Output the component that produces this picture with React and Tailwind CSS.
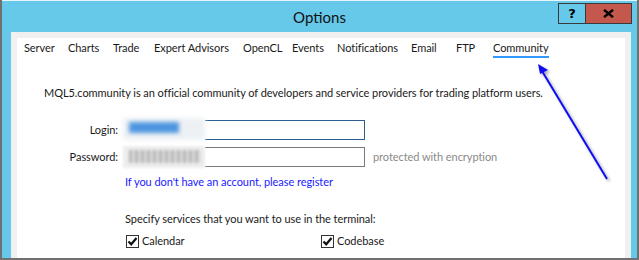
import React from 'react';

const tabs = [
  { label: 'Server', w: 'w-[44px]' },
  { label: 'Charts', w: 'w-[45px]' },
  { label: 'Trade', w: 'w-[41px]' },
  { label: 'Expert Advisors', w: 'w-[89px]' },
  { label: 'OpenCL', w: 'w-[49px]' },
  { label: 'Events', w: 'w-[45px]' },
  { label: 'Notifications', w: 'w-[74px]' },
  { label: 'Email', w: 'w-[45px]' },
  { label: 'FTP', w: 'w-[37px]' },
];

function CheckBox({ label }) {
  return (
    <label className="flex items-center">
      <span className="w-[13px] h-[13px] border border-[#333] bg-white flex items-center justify-center">
        <svg width="11" height="11" viewBox="0 0 11 11">
          <path d="M1.5 5.5 L4.2 8.3 L9.5 2" fill="none" stroke="#111" strokeWidth="2.2" />
        </svg>
      </span>
      <span className="ml-[3px]">{label}</span>
    </label>
  );
}

export default function App() {
  return (
    <div className="relative w-[639px] h-[260px] overflow-hidden bg-[#67c9e9] border-l-2 border-r-2 border-b-2 border-[#707070] flex flex-col text-[11px] tracking-[-0.06px] text-[#1a1a1a] font-['Lato',sans-serif]">
      {/* Title bar */}
      <div className="relative h-[32px] shrink-0 border-t border-[#e8f6fb] flex items-center justify-center">
        <span className="text-[15px] tracking-normal text-[#111] mt-[2px]">Options</span>
        <div className="absolute right-[5px] top-[2px] flex border border-[#3a3a3a] h-[21px]">
          <div className="w-[27px] bg-[#67c9e9] border-r border-[#3a3a3a] flex items-center justify-center font-bold text-[13px] text-black font-['DejaVu_Sans',sans-serif]">
            ?
          </div>
          <div className="w-[45px] bg-[#c4584c] flex items-center justify-center">
            <svg width="11" height="9" viewBox="0 0 11 9">
              <path d="M1 0.8 L10 8.2 M10 0.8 L1 8.2" stroke="#000" strokeWidth="2.4" />
            </svg>
          </div>
        </div>
      </div>

      {/* Frame */}
      <div className="flex-1 flex pl-[9px] pr-[6px]">
        <div className="flex-1 flex bg-[#f0f0f0] pl-[6px] pr-[6px] pt-[6px]">
          <div className="relative flex-1 bg-white flex flex-col">
            {/* Tabs */}
            <div className="flex pl-[7px] pt-[2px] leading-[16px]">
              {tabs.map((t) => (
                <span key={t.label} className={`${t.w} whitespace-nowrap`}>{t.label}</span>
              ))}
              <span className="whitespace-nowrap border-b-2 border-[#3399ff] h-[18px]">Community</span>
            </div>

            <p className="mt-[27px] pl-[27px] leading-[16px] whitespace-nowrap">
              MQL5.community is an official community of developers and service providers for trading platform users.
            </p>

            {/* Login */}
            <div className="mt-[19px] pl-[27px] flex items-center">
              <span className="w-[74px] text-right">Login:</span>
              <div className="ml-[5px] w-[242px] h-[20px] border border-[#2a5f8f]" />
            </div>
            <div className="mt-[7px] pl-[27px] flex items-center">
              <span className="w-[74px] text-right">Password:</span>
              <div className="ml-[5px] w-[242px] h-[20px] border border-[#7a7a7a]" />
              <span className="ml-[8px] text-[#8a8a8a]">protected with encryption</span>
            </div>

            <a className="mt-[7px] pl-[108px] leading-[16px] text-[#1a1aff]">
              If you don't have an account, please register
            </a>

            <p className="mt-[21px] pl-[108px] leading-[16px]">
              Specify services that you want to use in the terminal:
            </p>

            <div className="mt-[6px] pl-[109px] flex leading-[16px]">
              <div className="w-[195px]">
                <CheckBox label="Calendar" />
              </div>
              <CheckBox label="Codebase" />
            </div>

            {/* blurred credentials */}
            <div className="absolute left-[106px] top-[80px] w-[82px] h-[52px] bg-white">
              <div className="absolute left-0 top-0 w-[82px] h-[22px] bg-[#eef1f4] blur-[2px]" />
              <div className="absolute left-[6px] top-[4px] w-[50px] h-[11px] bg-[#4d95e0] blur-[2px]" />
              <div className="absolute left-0 top-[28px] w-[82px] h-[22px] bg-[#eeeeee] blur-[1px]" />
              <div className="absolute left-[6px] top-[32px] w-[72px] h-[13px] blur-[1.5px] bg-[repeating-linear-gradient(90deg,#b5b5b5_0px,#b5b5b5_3px,#dcdcdc_3px,#dcdcdc_6px)]" />
            </div>
          </div>
        </div>
      </div>

      {/* Annotation arrow */}
      <svg className="absolute left-0 top-0 pointer-events-none" width="639" height="260">
        <defs>
          <filter id="sh" x="-20%" y="-20%" width="140%" height="140%">
            <feDropShadow dx="2" dy="2" stdDeviation="1.5" floodColor="#000" floodOpacity="0.35" />
          </filter>
        </defs>
        <g filter="url(#sh)">
          <line x1="605" y1="179" x2="540" y2="71" stroke="#1010f0" strokeWidth="2" />
          <path d="M536 64 L546 70 L538 74 Z" fill="#1010f0" />
        </g>
      </svg>
    </div>
  );
}
